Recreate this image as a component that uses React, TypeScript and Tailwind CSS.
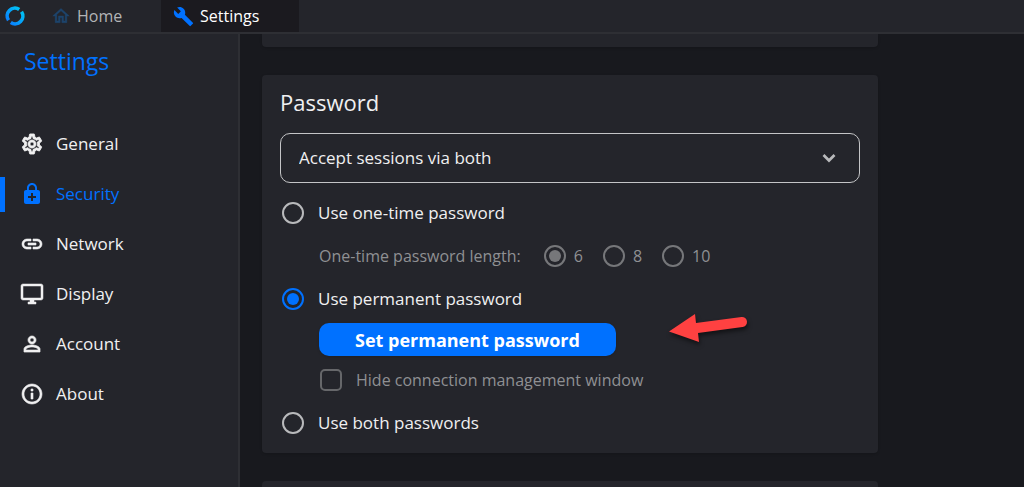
import { useState } from "react";
import type { ComponentType } from "react";
import {
  MdBuild,
  MdEnhancedEncryption,
  MdInfoOutline,
  MdLink,
  MdOutlineDesktopWindows,
  MdOutlineHome,
  MdOutlineSettings,
  MdPersonOutline,
} from "react-icons/md";

type IconType = ComponentType<{ className?: string }>;

const sections: { label: string; icon: IconType; weight: string }[] = [
  { label: "General", icon: MdOutlineSettings, weight: "stroke-[0.9]" },
  { label: "Security", icon: MdEnhancedEncryption, weight: "stroke-0" },
  { label: "Network", icon: MdLink, weight: "stroke-[0.6]" },
  { label: "Display", icon: MdOutlineDesktopWindows, weight: "stroke-[0.5]" },
  { label: "Account", icon: MdPersonOutline, weight: "stroke-[0.7]" },
  { label: "About", icon: MdInfoOutline, weight: "stroke-[0.6]" },
];

const radioBase =
  "size-[22px] shrink-0 appearance-none rounded-full border-2 bg-clip-content p-[3px]";

function Logo() {
  return (
    <svg viewBox="0 0 20 20" className="size-5" aria-hidden="true">
      <defs>
        <linearGradient
          id="ring"
          gradientUnits="userSpaceOnUse"
          x1="3"
          y1="17"
          x2="17"
          y2="3"
        >
          <stop offset="0" stopColor="#0a7cff" />
          <stop offset="1" stopColor="#00c8f4" />
        </linearGradient>
      </defs>
      <g fill="none" stroke="url(#ring)" strokeWidth="3.6">
        <path d="M14.2 3.500 A7.700 7.700 0 0 0 3.500 14.2" />
        <path d="M16.500 5.800 A7.700 7.700 0 0 1 5.800 16.500" />
      </g>
    </svg>
  );
}

function Arrow() {
  return (
    <svg
      viewBox="0 0 84 36"
      className="h-9 w-[84px] overflow-visible drop-shadow-[1px_3px_2px_rgba(0,0,0,0.5)]"
      aria-hidden="true"
    >
      <path
        d="M0 18.5 L26 1 L27 10 L72.500 4 A5 5 0 0 1 73.500 14 L29 20 L30 29 Z"
        fill="#ff4141"
      />
    </svg>
  );
}

function MainOption(props: {
  label: string;
  checked: boolean;
  onSelect: () => void;
}) {
  return (
    <label className="flex h-[30px] items-center gap-[14px] text-[17px] text-[#f0f0f1]">
      <input
        type="radio"
        name="mode"
        checked={props.checked}
        onChange={props.onSelect}
        className={`${radioBase} border-[#b9babc] checked:border-[#0071ff] checked:bg-[#0071ff]`}
      />
      {props.label}
    </label>
  );
}

export default function App() {
  const [active, setActive] = useState("Security");
  const [mode, setMode] = useState("permanent");

  return (
    <div className="flex h-screen flex-col overflow-hidden bg-[#18191e] font-['Open_Sans','Noto_Sans',sans-serif] text-[#f0f0f1]">
      <header className="flex h-[34px] shrink-0 border-b-2 border-[#2e2f34] bg-[#24252b] text-base">
        <div className="flex w-[51px] items-center pl-[5px]">
          <Logo />
        </div>
        <nav className="flex">
          <button className="flex w-[110px] items-center gap-[6px] text-[#b3b4b6]">
            <MdOutlineHome className="size-5 stroke-[0.5] text-[#1d446c] [&_[fill=none]]:stroke-none" />
            Home
          </button>
          <button className="flex w-[138px] items-center gap-[6px] bg-[#1b1a1f] pl-3 text-white">
            <MdBuild className="size-[21px] text-[#0071ff]" />
            Settings
          </button>
        </nav>
      </header>

      <div className="flex min-h-0 flex-1">
        <aside className="w-60 shrink-0 border-r-2 border-[#2e2f34] bg-[#24252b]">
          <h1 className="px-6 pt-[11px] text-[23px] leading-8 text-[#0071ff]">
            Settings
          </h1>
          <nav className="mt-[42px] flex flex-col">
            {sections.map(({ label, icon: Icon, weight }) => {
              const on = label === active;
              return (
                <button
                  key={label}
                  onClick={() => setActive(label)}
                  className={`flex h-[50px] items-center text-[17px] ${on ? "text-[#0071ff]" : "text-[#f0f0f1]"}`}
                >
                  <span
                    className={`h-[35px] w-[5px] ${on ? "bg-[#0071ff]" : "bg-transparent"}`}
                  />
                  <span className="ml-[15px] mr-3 flex">
                    <Icon
                      className={`size-6 [&_[fill=none]]:stroke-none ${weight}`}
                    />
                  </span>
                  {label}
                </button>
              );
            })}
          </nav>
        </aside>

        <main className="flex min-w-0 flex-1 flex-col gap-7 overflow-hidden pl-[22px] pr-6">
          <section className="h-[13px] w-full max-w-[616px] shrink-0 rounded-b bg-[#24252b] shadow" />

          <section className="relative w-full max-w-[616px] shrink-0 rounded bg-[#24252b] px-[18px] pb-[15px] pt-[11px] shadow">
            <h2 className="text-[22px] leading-8">Password</h2>

            <div className="relative mt-[15px]">
              <select
                aria-label="Session acceptance"
                className="h-[50px] w-full appearance-none rounded-[10px] border border-[#c4c5c7] bg-transparent px-[18px] text-[17px]"
              >
                <option>Accept sessions via both</option>
              </select>
              <svg
                viewBox="0 0 14 10"
                className="pointer-events-none absolute right-6 top-5 h-[10px] w-[14px]"
                aria-hidden="true"
              >
                <path
                  d="M1.500 2 L7 7.500 L12.500 2"
                  fill="none"
                  stroke="#b9babc"
                  strokeWidth="2.700"
                />
              </svg>
            </div>

            <div className="mt-[15px] flex flex-col gap-[13px] pl-[2px]">
              <MainOption
                label="Use one-time password"
                checked={mode === "once"}
                onSelect={() => setMode("once")}
              />

              <fieldset disabled>
                <div className="flex h-[30px] items-center pl-[37px] text-base text-[#8f9093]">
                  <span className="mr-[23px]">One-time password length:</span>
                  <span className="flex gap-5">
                    {["6", "8", "10"].map((length) => (
                      <label key={length} className="flex items-center gap-2">
                        <input
                          type="radio"
                          name="length"
                          defaultChecked={length === "6"}
                          className={`${radioBase} border-[#76777a] checked:bg-[#76777a]`}
                        />
                        {length}
                      </label>
                    ))}
                  </span>
                </div>
              </fieldset>

              <div className="flex flex-col items-start gap-[9px]">
                <MainOption
                  label="Use permanent password"
                  checked={mode === "permanent"}
                  onSelect={() => setMode("permanent")}
                />
                <button className="ml-[37px] h-[33px] rounded-[10px] bg-[#0071ff] px-9 text-lg font-bold text-white shadow">
                  Set permanent password
                </button>
                <label className="ml-[38px] flex h-[30px] items-center gap-[14px] text-base text-[#8f9093]">
                  <input
                    type="checkbox"
                    disabled
                    className="size-[22px] appearance-none rounded-[5px] border-2 border-[#66676a]"
                  />
                  Hide connection management window
                </label>
              </div>

              <MainOption
                label="Use both passwords"
                checked={mode === "both"}
                onSelect={() => setMode("both")}
              />
            </div>

            <div className="pointer-events-none absolute left-[407px] top-[238px]">
              <Arrow />
            </div>
          </section>

          <section className="w-full max-w-[616px] flex-1 rounded-t bg-[#24252b]" />
        </main>
      </div>
    </div>
  );
}
